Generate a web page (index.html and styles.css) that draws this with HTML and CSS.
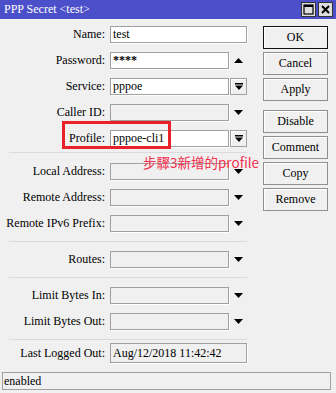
FILE: index.html
```html
<!DOCTYPE html>
<html lang="en">
<head>
    <meta charset="UTF-8">
    <meta name="viewport" content="width=device-width, initial-scale=1.0">
    <title>PPP Secret</title>
    <link rel="stylesheet" href="styles.css">
</head>
<body>
    <div class="titlebar">
        <span class="title">PPP Secret &lt;test&gt;</span>
        <div class="title-buttons">
            <span class="tbtn">
                <svg width="11" height="11" viewBox="0 0 11 11"><rect x="1" y="1" width="9" height="9" fill="none" stroke="#000" stroke-width="1.2"/><rect x="1" y="1" width="9" height="2" fill="#000"/></svg>
            </span>
            <span class="tbtn">
                <svg width="11" height="11" viewBox="0 0 11 11"><path d="M2 2 L9 9 M9 2 L2 9" stroke="#000" stroke-width="2"/></svg>
            </span>
        </div>
    </div>

    <div class="main">
        <div class="form">
            <div class="group">
                <div class="row"><label>Name:</label><div class="field filled wide">test</div></div>
                <div class="row"><label>Password:</label><div class="field filled stars">****</div>
                    <span class="side"><svg width="9" height="5" viewBox="0 0 9 5"><polygon points="0,5 9,5 4.5,0" fill="#000"/></svg></span></div>
                <div class="row"><label>Service:</label><div class="field filled">pppoe</div>
                    <span class="side drop"><svg width="8" height="7" viewBox="0 0 8 7"><rect x="0" y="0" width="8" height="1.5" fill="#000"/><polygon points="0,2.5 8,2.5 4,7" fill="#000"/></svg></span></div>
                <div class="row"><label>Caller ID:</label><div class="field"></div>
                    <span class="side"><svg width="9" height="5" viewBox="0 0 9 5"><polygon points="0,0 9,0 4.5,5" fill="#000"/></svg></span></div>
                <div class="row"><label>Profile:</label><div class="field filled">pppoe-cli1</div>
                    <span class="side drop"><svg width="8" height="7" viewBox="0 0 8 7"><rect x="0" y="0" width="8" height="1.5" fill="#000"/><polygon points="0,2.5 8,2.5 4,7" fill="#000"/></svg></span></div>
            </div>
            <div class="sep first"></div>
            <div class="group">
                <div class="row"><label>Local Address:</label><div class="field"></div>
                    <span class="side"><svg width="9" height="5" viewBox="0 0 9 5"><polygon points="0,0 9,0 4.5,5" fill="#000"/></svg></span></div>
                <div class="row"><label>Remote Address:</label><div class="field"></div>
                    <span class="side"><svg width="9" height="5" viewBox="0 0 9 5"><polygon points="0,0 9,0 4.5,5" fill="#000"/></svg></span></div>
                <div class="row"><label>Remote IPv6 Prefix:</label><div class="field"></div>
                    <span class="side"><svg width="9" height="5" viewBox="0 0 9 5"><polygon points="0,0 9,0 4.5,5" fill="#000"/></svg></span></div>
            </div>
            <div class="sep"></div>
            <div class="group">
                <div class="row"><label>Routes:</label><div class="field"></div>
                    <span class="side"><svg width="9" height="5" viewBox="0 0 9 5"><polygon points="0,0 9,0 4.5,5" fill="#000"/></svg></span></div>
            </div>
            <div class="sep"></div>
            <div class="group">
                <div class="row"><label>Limit Bytes In:</label><div class="field"></div>
                    <span class="side"><svg width="9" height="5" viewBox="0 0 9 5"><polygon points="0,0 9,0 4.5,5" fill="#000"/></svg></span></div>
                <div class="row"><label>Limit Bytes Out:</label><div class="field"></div>
                    <span class="side"><svg width="9" height="5" viewBox="0 0 9 5"><polygon points="0,0 9,0 4.5,5" fill="#000"/></svg></span></div>
            </div>
            <div class="sep last"></div>
            <div class="row tall"><label>Last Logged Out:</label><div class="field wide tall">Aug/12/2018 11:42:42</div></div>
        </div>

        <div class="buttons">
            <button class="btn default">OK</button>
            <button class="btn">Cancel</button>
            <button class="btn">Apply</button>
            <button class="btn spaced">Disable</button>
            <button class="btn">Comment</button>
            <button class="btn">Copy</button>
            <button class="btn">Remove</button>
        </div>

        <!-- annotation drawn over the dialog -->
        <div class="note-box"></div>
        <div class="note-text">步驟3新增的profile</div>
    </div>

    <div class="status">enabled</div>
</body>
</html>
```
FILE: styles.css
```css
body {
    margin: 0;
    background-color: #f0f0f0;
    font-family: "Liberation Serif", "Times New Roman", serif;
    font-size: 12px;
    color: #000;
}
.titlebar {
    height: 19px;
    background-color: #4b4fc9;
    color: #fff;
    display: flex;
    align-items: center;
    justify-content: space-between;
    padding: 0 3px 0 4px;
}
.title-buttons {
    display: flex;
    gap: 2px;
}
.tbtn {
    width: 15px;
    height: 15px;
    box-sizing: border-box;
    border: 1px solid #333;
    background-color: #dedede;
    display: flex;
    align-items: center;
    justify-content: center;
}
.main {
    position: relative;
    display: flex;
    gap: 16px;
    padding-top: 7px;
}
.form {
    width: 247px;
}
.group {
    display: flex;
    flex-direction: column;
    gap: 9px;
}
.row {
    display: flex;
    align-items: center;
    height: 17px;
}
.row.tall {
    height: 20px;
}
.row label {
    width: 105px;
    margin-right: 5px;
    text-align: right;
    white-space: nowrap;
}
.field {
    box-sizing: border-box;
    width: 119px;
    height: 17px;
    border: 1px solid #a0a0a0;
    box-shadow: 1px 1px 0 #fff;
    padding: 0 2px;
    line-height: 15px;
    white-space: nowrap;
}
.field.filled {
    background-color: #fff;
}
.field.stars {
    font-weight: bold;
}
.field.wide {
    width: 137px;
}
.field.tall {
    height: 20px;
    line-height: 18px;
}
.side {
    box-sizing: border-box;
    width: 17px;
    height: 17px;
    margin-left: 1px;
    display: flex;
    align-items: center;
    justify-content: center;
}
.side.drop {
    border: 1px solid #a0a0a0;
    box-shadow: inset 1px 1px 0 #fff;
}
.sep {
    height: 1px;
    background-color: #dadada;
    margin: 9px 0 9px 9px;
}
.sep.first {
    margin-top: 5px;
    margin-bottom: 10px;
}
.sep.last {
    margin-bottom: 3px;
}
.buttons {
    display: flex;
    flex-direction: column;
    gap: 3px;
    width: 65px;
}
.btn {
    box-sizing: border-box;
    height: 23px;
    padding: 0;
    font: inherit;
    color: #000;
    background-color: #f0f0f0;
    border: 1px solid #8f8f8f;
    box-shadow: inset 1px 1px 0 #fff;
}
.btn.default {
    border-color: #111;
}
.btn.spaced {
    margin-top: 6px;
}
.note-box {
    position: absolute;
    left: 62px;
    top: 102px;
    width: 109px;
    height: 28px;
    box-sizing: border-box;
    border: 3px solid #e8212b;
}
.note-text {
    position: absolute;
    left: 143px;
    top: 135px;
    font-family: "Noto Sans CJK TC", "Noto Sans", sans-serif;
    font-size: 13.5px;
    line-height: 17px;
    color: #f2304f;
}
.status {
    height: 18px;
    box-sizing: border-box;
    margin: 9px 5px 0 2px;
    padding-left: 1px;
    border: 1px solid #a0a0a0;
    line-height: 16px;
}
```
